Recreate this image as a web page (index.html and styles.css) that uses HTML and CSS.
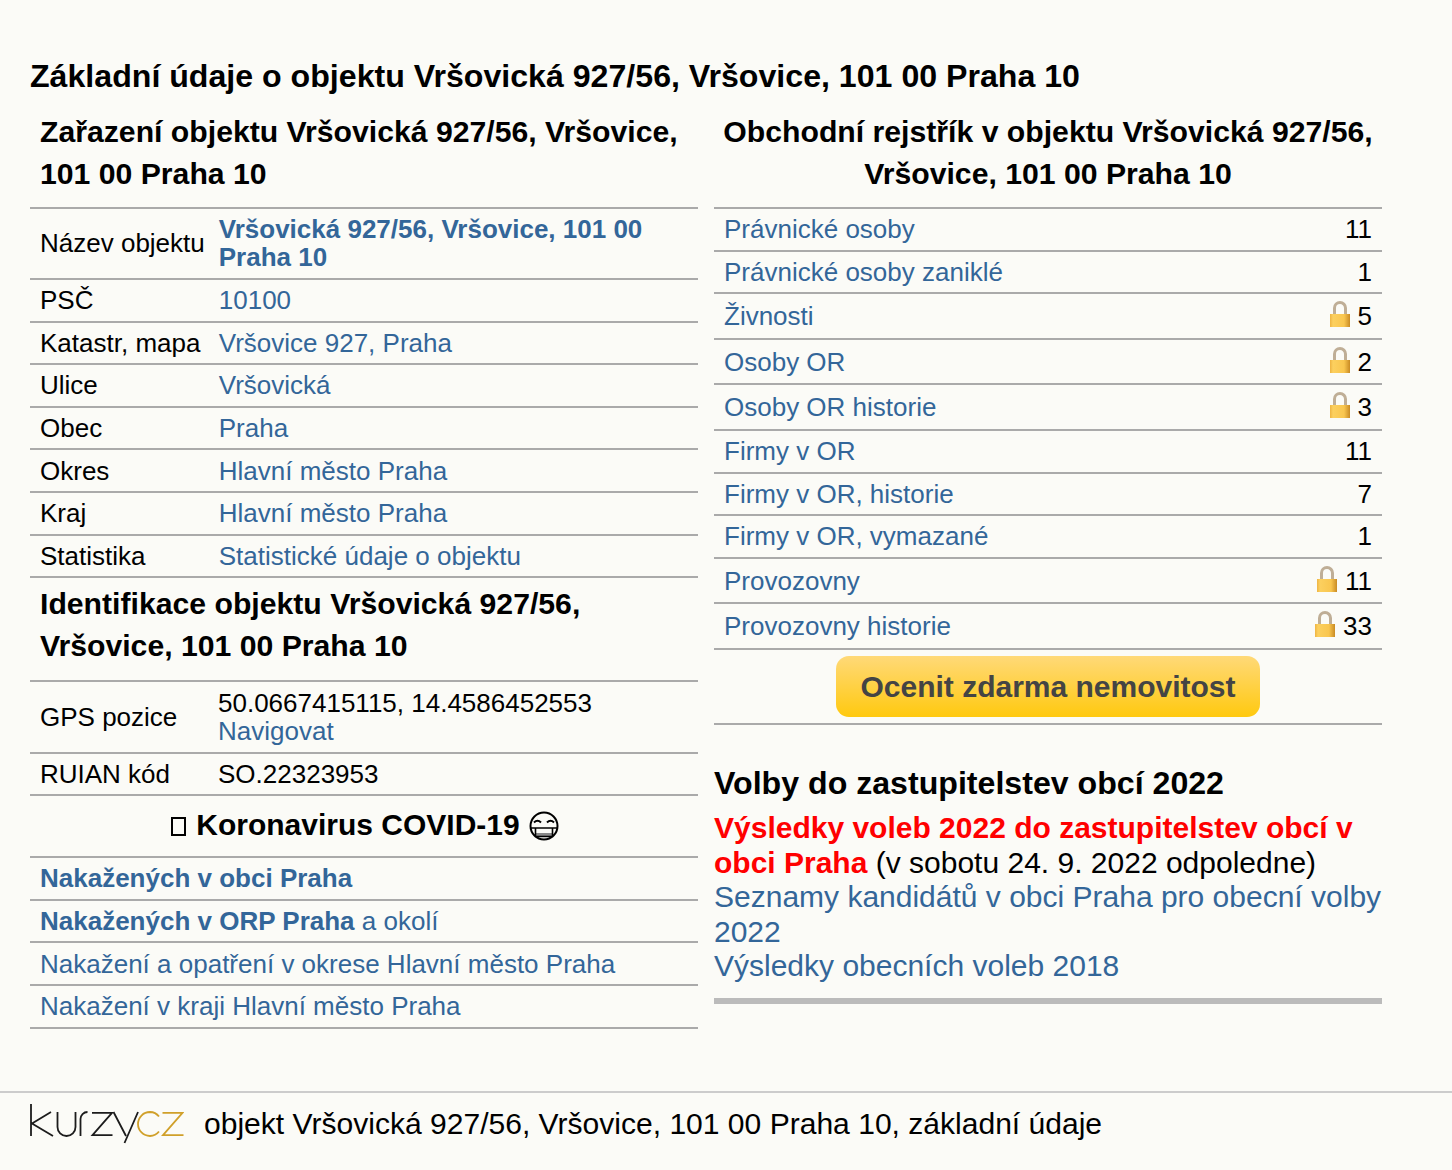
FILE: index.html
```html
<!DOCTYPE html>
<html lang="cs">
<head>
<meta charset="utf-8">
<title>Vršovická 927/56</title>
<link rel="stylesheet" href="styles.css">
</head>
<body>
<svg class="defs" width="0" height="0">
  <defs>
    <linearGradient id="lockbody" x1="0" x2="1" y1="0" y2="0">
      <stop offset="0" stop-color="#eeb443"/><stop offset="0.15" stop-color="#fcd05f"/><stop offset="0.7" stop-color="#f9c64f"/><stop offset="1" stop-color="#c98b24"/>
    </linearGradient>
    <symbol id="lock" viewBox="0 0 20 26">
      <path d="M4.500 13V7a5.500 5.500 0 0 1 11 0v6" fill="none" stroke="#bfae96" stroke-width="3"/>
      <rect x="0" y="13" width="20" height="13" fill="url(#lockbody)"/>
    </symbol>
  </defs>
</svg>
<main class="page">
  <h1 class="title">Základní údaje o objektu Vršovická 927/56, Vršovice, 101 00 Praha 10</h1>
  <div class="columns">
    <section class="col">
      <h2 class="head">Zařazení objektu Vršovická 927/56, Vršovice, 101 00 Praha 10</h2>
      <table class="tbl">
        <tr class="tall first"><td class="lab">Název objektu</td><td><a class="b" href="#">Vršovická 927/56, Vršovice, 101 00 Praha 10</a></td></tr>
        <tr><td class="lab">PSČ</td><td><a href="#">10100</a></td></tr>
        <tr><td class="lab">Katastr, mapa</td><td><a href="#">Vršovice 927, Praha</a></td></tr>
        <tr><td class="lab">Ulice</td><td><a href="#">Vršovická</a></td></tr>
        <tr><td class="lab">Obec</td><td><a href="#">Praha</a></td></tr>
        <tr><td class="lab">Okres</td><td><a href="#">Hlavní město Praha</a></td></tr>
        <tr><td class="lab">Kraj</td><td><a href="#">Hlavní město Praha</a></td></tr>
        <tr><td class="lab">Statistika</td><td><a href="#">Statistické údaje o objektu</a></td></tr>
      </table>
      <h2 class="head sub">Identifikace objektu Vršovická 927/56, Vršovice, 101 00 Praha 10</h2>
      <table class="tbl">
        <tr class="tall gps"><td class="lab">GPS pozice</td><td>50.0667415115, 14.4586452553<br><a href="#">Navigovat</a></td></tr>
        <tr class="ruian"><td class="lab">RUIAN kód</td><td>SO.22323953</td></tr>
      </table>
      <h2 class="covid"><span class="tofu"></span> Koronavirus COVID-19 <svg class="mask" viewBox="0 0 30 30" role="img" aria-label="rouška">
        <circle cx="15" cy="15" r="13.500" fill="none" stroke="#000" stroke-width="2"/>
        <path d="M5 11.500q3.500-3.500 7 0M18 11.500q3.500-3.500 7 0" fill="none" stroke="#000" stroke-width="2"/>
        <rect x="7" y="22" width="16" height="4" fill="#888"/>
        <path d="M2 17H28M6.500 17V25.500H23.500V17" fill="none" stroke="#000" stroke-width="1.600"/>
      </svg></h2>
      <table class="tbl">
        <tr><td><a class="b" href="#">Nakažených v obci Praha</a></td></tr>
        <tr><td><a class="b" href="#">Nakažených v ORP Praha</a> <a href="#">a okolí</a></td></tr>
        <tr><td><a href="#">Nakažení a opatření v okrese Hlavní město Praha</a></td></tr>
        <tr><td><a href="#">Nakažení v kraji Hlavní město Praha</a></td></tr>
      </table>
    </section>
    <section class="col">
      <h2 class="head center">Obchodní rejstřík v objektu Vršovická 927/56, Vršovice, 101 00 Praha 10</h2>
      <table class="tbl stats">
        <tr><td><a href="#">Právnické osoby</a></td><td class="num">11</td></tr>
        <tr><td><a href="#">Právnické osoby zaniklé</a></td><td class="num">1</td></tr>
        <tr class="locked"><td><a href="#">Živnosti</a></td><td class="num"><svg class="lock"><use href="#lock"/></svg>5</td></tr>
        <tr class="locked"><td><a href="#">Osoby OR</a></td><td class="num"><svg class="lock"><use href="#lock"/></svg>2</td></tr>
        <tr class="locked"><td><a href="#">Osoby OR historie</a></td><td class="num"><svg class="lock"><use href="#lock"/></svg>3</td></tr>
        <tr><td><a href="#">Firmy v OR</a></td><td class="num">11</td></tr>
        <tr><td><a href="#">Firmy v OR, historie</a></td><td class="num">7</td></tr>
        <tr><td><a href="#">Firmy v OR, vymazané</a></td><td class="num">1</td></tr>
        <tr class="locked"><td><a href="#">Provozovny</a></td><td class="num"><svg class="lock"><use href="#lock"/></svg>11</td></tr>
        <tr class="locked"><td><a href="#">Provozovny historie</a></td><td class="num"><svg class="lock"><use href="#lock"/></svg>33</td></tr>
      </table>
      <div class="cta"><a class="btn" href="#">Ocenit zdarma nemovitost</a></div>
      <div class="volby">
        <h2 class="vhead">Volby do zastupitelstev obcí 2022</h2>
        <p class="vtext"><a class="red" href="#">Výsledky voleb 2022 do zastupitelstev obcí v obci Praha</a> (v sobotu 24. 9. 2022 odpoledne)<br>
        <a href="#">Seznamy kandidátů v obci Praha pro obecní volby 2022</a><br>
        <a href="#">Výsledky obecních voleb 2018</a></p>
      </div>
    </section>
  </div>
</main>
<footer class="foot">
  <svg class="logo" viewBox="0 0 154 40" width="154" height="40" role="img" aria-label="kurzy cz">
    <g fill="none" stroke="#1c1c1c" stroke-width="1.800">
      <path d="M1 0V32M21 8L2 19.500L23 32"/>
      <path d="M27.500 8V23a9 9 0 0 0 18 0V8"/>
      <path d="M50.500 32V15a7 7 0 0 1 7-7"/>
      <path d="M62 8.800H82L62.500 31.200H82.500"/>
      <path d="M83.500 8L96 32M108 8L94.500 39"/>
    </g>
    <g fill="none" stroke="#d0a02a" stroke-width="1.800">
      <path d="M129 12.500a12 12 0 0 0-9-4.500a12 12 0 0 0 0 24a12 12 0 0 0 9-4.500"/>
      <path d="M132.500 8.800H152.500L133 31.200H153.500"/>
    </g>
  </svg>
  <span class="foot-text">objekt Vršovická 927/56, Vršovice, 101 00 Praha 10, základní údaje</span>
</footer>
</body>
</html>
```
FILE: styles.css
```css
html, body { margin: 0; padding: 0; }
body {
  background: #fbfbf7;
  color: #000;
  font-family: "Liberation Sans", Arial, sans-serif;
  font-size: 26px;
  line-height: 28px;
}
a { color: #336699; text-decoration: none; }
a.b { font-weight: bold; }
.defs { position: absolute; }
.page { padding: 55px 30px 0; height: 1091px; box-sizing: border-box; }
.title { margin: 0 0 8px; font-size: 32.13px; line-height: 42px; font-weight: bold; }
.columns { display: flex; gap: 16px; align-items: flex-start; width: 1352px; }
.col { width: 668px; flex: none; }
.head { margin: 0; padding: 6px 10px 12px; font-size: 30.2px; line-height: 42px; font-weight: bold; }
.head.sub { padding-top: 5px; padding-bottom: 13px; }
.head.center { padding-left: 0; padding-right: 0; text-align: center; }
.tbl { width: 100%; border-collapse: separate; border-spacing: 0; border-top: 2px solid #aaa; }
.tbl td { padding: 6.3px 10px; border-bottom: 2px solid #aaa; vertical-align: middle; }
.tbl .lab { width: 164px; padding-right: 4px; white-space: nowrap; }
.tall td { padding-top: 6.5px; padding-bottom: 6.5px; }
.first td { padding-top: 6px; padding-bottom: 7px; }
.gps td { padding-top: 7px; padding-bottom: 7px; }
.tbl .ruian td { padding-top: 5.5px; padding-bottom: 6.5px; }
.stats .num { text-align: right; white-space: nowrap; }
.locked td { padding-top: 7.8px; padding-bottom: 7.8px; }
.lock { width: 20px; height: 26px; margin: -6px 8px -6px 0; vertical-align: 4px; }
.covid { margin: 0; padding: 9px 0 11px; font-size: 30px; line-height: 40px; text-align: center; }
.tofu { display: inline-block; box-sizing: border-box; width: 15px; height: 19px; margin: 0 2px 0 2px; border: 2px solid #000; vertical-align: -1px; }
.mask { width: 30px; height: 30px; margin: -6px 0 -6px 1px; vertical-align: 0; }
.cta { display: flex; justify-content: center; padding: 6px 0; border-bottom: 2px solid #aaa; }
.btn {
  display: block;
  width: 424px;
  height: 61px;
  line-height: 61px;
  text-align: center;
  border-radius: 13px;
  background: linear-gradient(#ffd978, #ffc90f);
  color: #444;
  font-size: 30px;
  font-weight: bold;
}
.volby { margin-top: 38px; border-bottom: 6px solid #bbb; padding-bottom: 14px; }
.vhead { margin: 0 0 8px; font-size: 32.13px; line-height: 40px; }
.vtext { margin: 0; font-size: 30px; line-height: 34.6px; }
.red { color: #ff0000; font-weight: bold; }
.foot { display: flex; align-items: flex-start; gap: 20px; box-sizing: border-box; height: 79px; padding: 11px 0 0 30px; border-top: 2px solid #ccc; font-size: 30.06px; line-height: 40px; }
.logo { flex: none; }
```
